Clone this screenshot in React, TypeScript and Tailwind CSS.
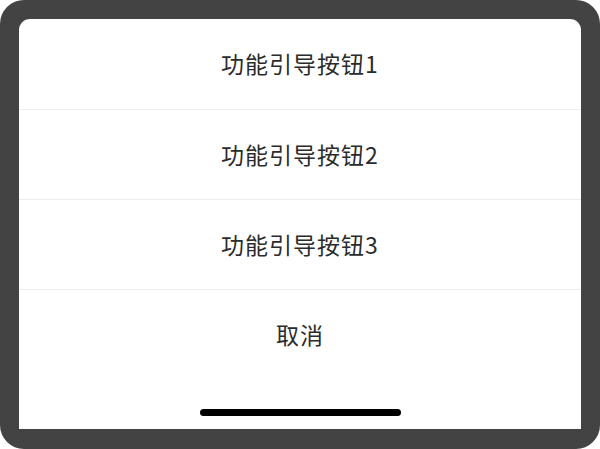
const ACTIONS = ['功能引导按钮1', '功能引导按钮2', '功能引导按钮3']

export default function App() {
  return (
    <div
      className="w-[600px] h-[449px] bg-white"
      style={{ fontFamily: '"Noto Sans CJK SC", "Noto Sans", sans-serif' }}
    >
      {/* 机身外框 */}
      <div className="w-full h-full bg-[#434343] rounded-[24px] pt-[19px] px-[19px] pb-[20px]">
        <div className="h-full bg-white rounded-t-[11px] flex flex-col overflow-hidden">
          {ACTIONS.map((label, i) => (
            <div
              key={label}
              className={`h-[90px] flex items-center justify-center text-[23px] tracking-[1px] text-[#2b2b2b] ${
                i > 0 ? 'border-t border-[#ececec]' : ''
              }`}
            >
              <span className={i === 0 ? '-mt-[1px]' : ''}>{label}</span>
            </div>
          ))}
          <div className="h-[90px] flex items-center justify-center text-[23px] tracking-[1px] text-[#2b2b2b] border-t border-[#ececec]">
            取消
          </div>
          {/* Home 指示条 */}
          <div className="flex-1 flex justify-center pt-[30px]">
            <div className="w-[201px] h-[7px] rounded-full bg-black" />
          </div>
        </div>
      </div>
    </div>
  )
}
